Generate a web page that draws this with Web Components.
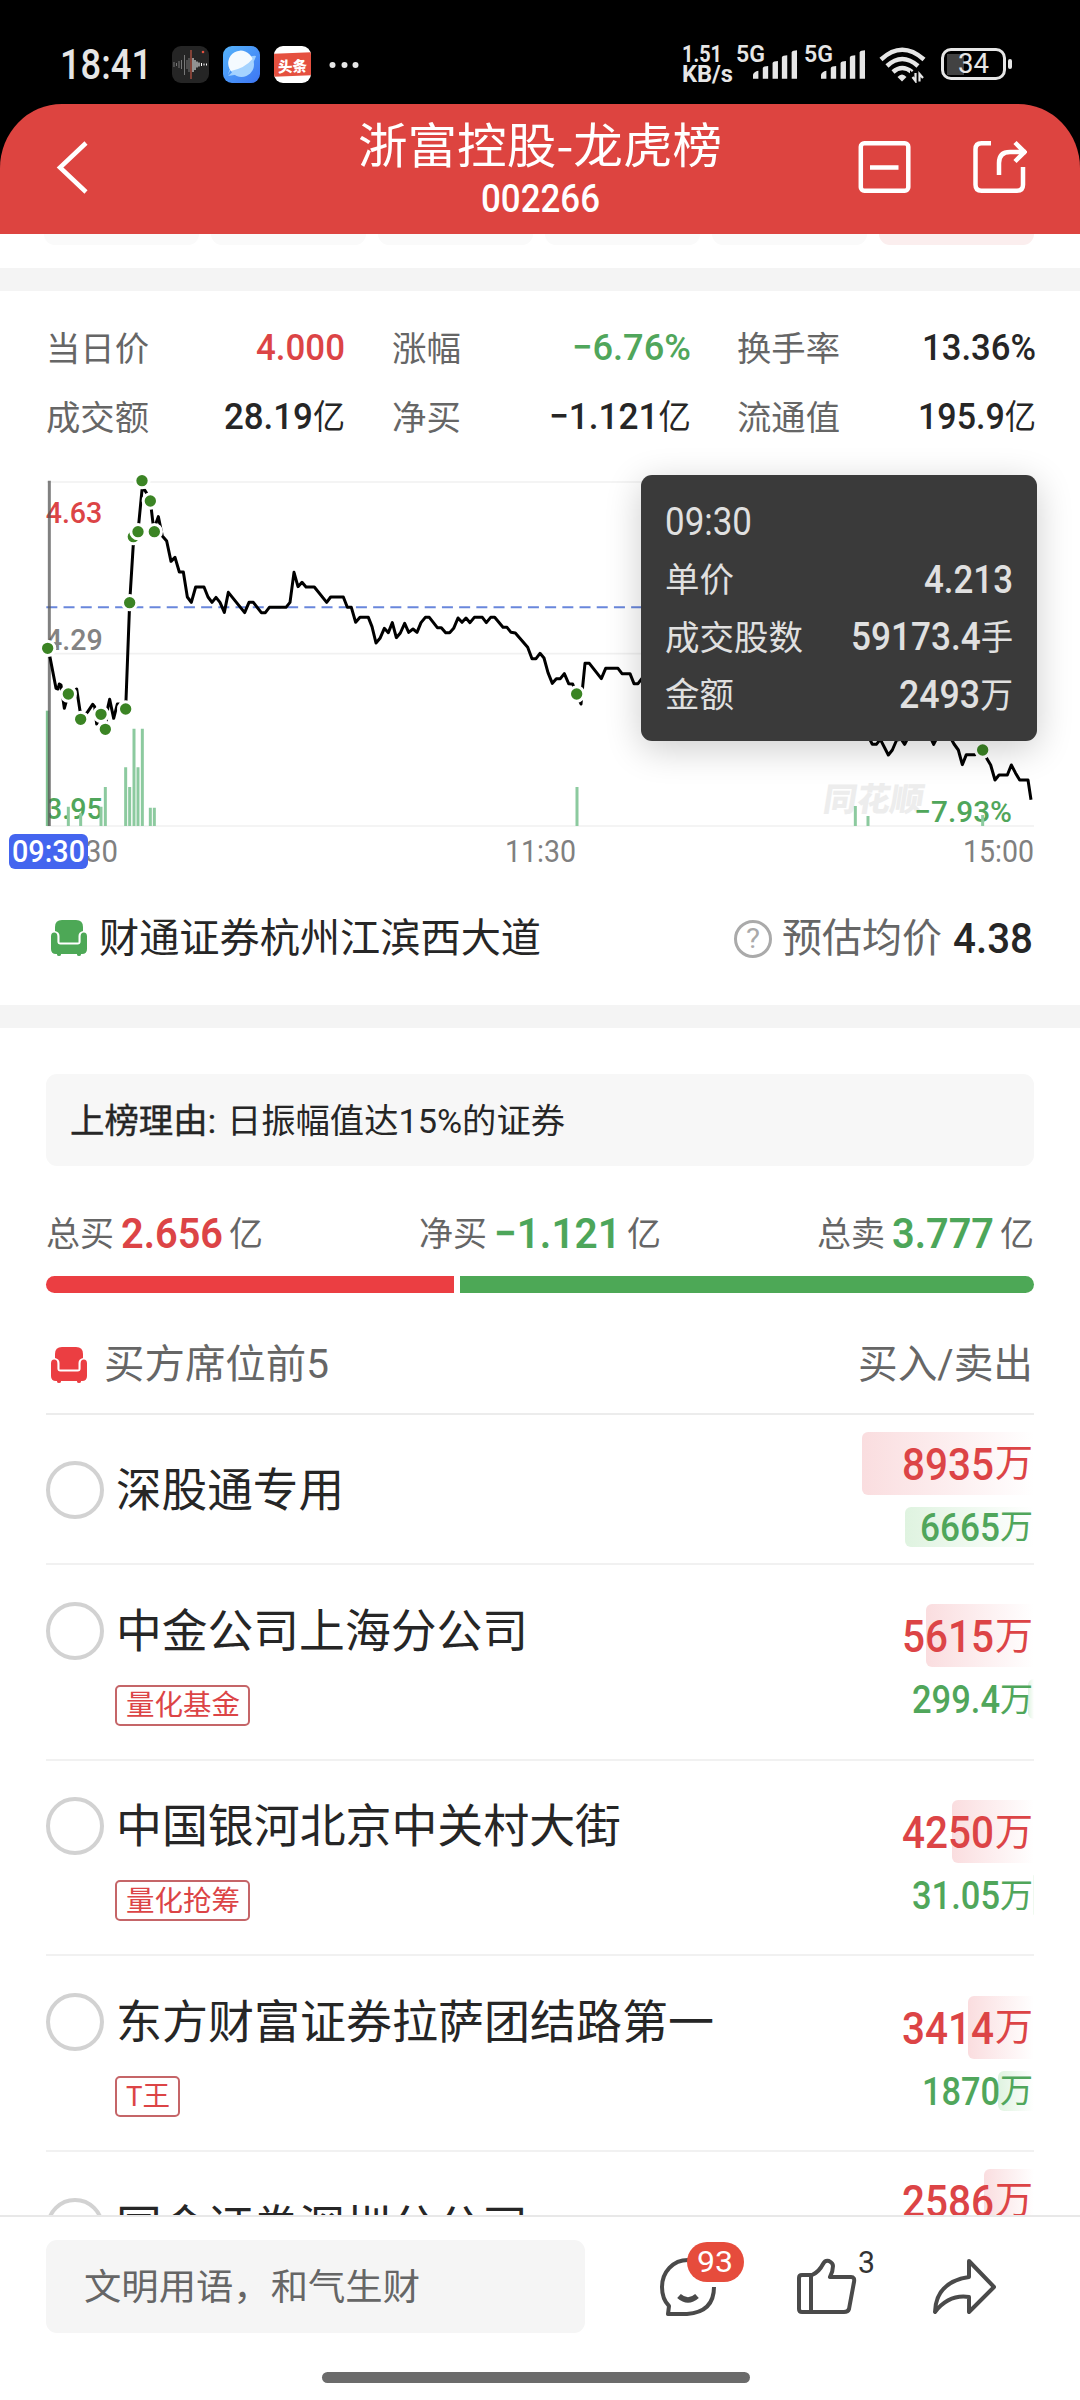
<!DOCTYPE html>
<html lang="zh-CN">
<head>
<meta charset="utf-8">
<title>浙富控股-龙虎榜</title>
<style>
html,body{margin:0;padding:0;background:#000}
body{font-family:Roboto,"Noto Sans CJK SC",sans-serif;color:#262626}
</style>
</head>
<body>
<stock-app></stock-app>
<script>
const define = (name, html, setup) => {
  customElements.define(name, class extends HTMLElement {
    connectedCallback() {
      if (this.shadowRoot) return;
      const root = this.attachShadow({ mode: 'open' });
      root.innerHTML = typeof html === 'function' ? html(this) : html;
      if (setup) setup(this, root);
    }
  });
};

/* A run of text set to an exact advance width: w = width, s = font size, b = weight, y = baseline nudge */
define('fit-text', el => `<style>
:host{display:block;flex:none;width:${el.getAttribute('w')}px;height:${el.getAttribute('s')}px;overflow:visible}
span{display:inline-block;white-space:pre;transform-origin:0 50%;font-size:${el.getAttribute('s')}px;line-height:${el.getAttribute('s')}px;font-weight:${el.getAttribute('b') || 400}}
::slotted(i){font-style:normal;font-weight:400;font-size:.92em}
</style><span><slot></slot></span>`, (el, root) => {
  const s = root.querySelector('span');
  const k = +el.getAttribute('w') / s.getBoundingClientRect().width;
  const y = el.getAttribute('y') || 0;
  s.style.transform = `translateY(${y}px) scaleX(${k})`;
});

define('signal-bars', `<style>:host{display:flex;align-items:flex-start;height:37px;width:62px}svg{display:block;margin-left:-12px}</style>
<fit-text w="29" s="24" b="600" y="-4">5G</fit-text>
<svg width="46" height="37" viewBox="0 0 46 37" fill="#e6e6e6"><path d="M0 33v-4q1-3 5.500-4v8zM10 33V22q1-2 5.500-2v13zM20 33V17q1-2 5.500-2v18zM29.500 33V11q1-2 5.500-2v24zM39.500 33V6q1-2 5.500-2v29z"/></svg>`);

define('status-bar', `<style>
:host{display:flex;height:104px;background:#000;color:#e6e6e6;box-sizing:border-box;padding:46px 68px 0 60px;align-items:flex-start}
svg{display:block;flex:none}
.l{display:flex;align-items:center;height:37px}
.tt{width:37px;height:37px;border-radius:9px;background:#fff;overflow:hidden;display:flex;align-items:center;margin-right:18px}
.tt div{width:37px;height:23px;background:#e5503f;color:#fff;display:flex;align-items:center;justify-content:center;transform:skewY(-2deg)}
.r{display:flex;margin-left:auto;height:37px}
.bat{width:65px;height:32px;box-sizing:border-box;border:3.500px solid #e6e6e6;border-radius:10px;margin:2px 1.500px 0 15px;display:flex;align-items:center;justify-content:center;background:linear-gradient(#424242,#424242) 3px 50%/17px 21px no-repeat}
.nub{width:4.500px;height:10px;background:#e6e6e6;border-radius:2px;margin-top:13px}
</style>
<div class="l">
<fit-text w="92" s="42" b="500">18:41</fit-text>
<svg style="margin-left:20px;margin-right:14px" width="37" height="37" viewBox="0 0 37 37"><rect width="37" height="37" rx="9" fill="#252525"/><g stroke="#777"><path d="M2 16v5M4.500 17v3M7 15v7M9.500 14v9M12.500 9v20M15 14v9M17 12v14"/></g><g stroke="#fff"><path d="M21 12v14M23 14v10M25 15.500v6M27 16.500v4M29.500 17v3M32 17.500v2M34.500 17.500v2"/></g><path d="M19 4v29" stroke="#e0604a"/><circle cx="31" cy="6" r="1.300" fill="#e0503f"/></svg>
<svg style="margin-right:14px" width="37" height="37" viewBox="0 0 37 37"><defs><linearGradient id="g" x2="1" y2="1"><stop stop-color="#55b4fb"/><stop offset="1" stop-color="#3d75f3"/></linearGradient></defs><rect width="37" height="37" rx="9" fill="url(#g)"/><path d="M5 29Q6 23 9 21M25 12q5-3 8-2-1 4-4 8-8 10-24 12" fill="#9dcfff"/><circle cx="18.500" cy="18.500" r="12.500" fill="#a5d3ff"/><path d="M8 25a12.500 12.500 0 1 1 21.500-12Q22 22 8 25z" fill="#f4faff"/></svg>
<div class="tt"><div><fit-text w="29" s="15" b="900">头条</fit-text></div></div>
<svg width="30" height="8" viewBox="0 0 30 8" fill="#e6e6e6"><circle cx="3.500" cy="4" r="3"/><circle cx="15.500" cy="4" r="3"/><circle cx="28" cy="4" r="3" transform="translate(-1.500)"/></svg>
</div>
<div class="r">
<div style="width:54px"><fit-text w="40" s="23" b="700" y="-3.500">1.51</fit-text><fit-text w="51" s="23" b="700" y="-6">KB/s</fit-text></div>
<signal-bars></signal-bars><signal-bars style="margin-left:6px"></signal-bars>
<svg style="margin-left:13px" width="47" height="37" viewBox="0 0 47 37" fill="none" stroke="#e6e6e6" stroke-width="4.500"><path d="M2 13.500Q23 -6 45 13.500M8 20Q23 6 39 20M14 26Q23 18 33 26"/><path d="M18.500 31q4.500-5 9 0l-4.500 4.500z" fill="#e6e6e6" stroke="none"/><path d="M33 29l4 4v3h-4zM37.500 27v8M41.500 36V28l3 3" stroke="#000" stroke-width="4"/><path d="M33.500 31l3 4V27M40.500 35.500V28l3.500 4" stroke-width="2.200"/></svg>
<div class="bat"><fit-text w="31" s="27">34</fit-text></div><div class="nub"></div>
</div>`);

define('title-bar', `<style>
:host{display:flex;height:130px;background:#dd4440;border-radius:62px 62px 0 0/64px 64px 0 0;color:#fff;box-sizing:border-box;padding:0 53px 0 56px;align-items:flex-start}
svg{fill:none;stroke:#fff;stroke-width:4.500;margin-top:36px;flex:none}
.c{display:flex;flex-direction:column;align-items:center;padding-top:16px;gap:14px;margin:0 auto 0 269px}
</style>
<svg width="33" height="56" viewBox="0 0 33 56"><path d="M30 3L4 27.500 30 52"/></svg>
<div class="c"><fit-text w="364" s="48" style="font-family:'Noto Sans CJK SC'" y="-2">浙富控股-龙虎榜</fit-text><fit-text w="119" s="38" b="500" y="-2">002266</fit-text></div>
<svg width="170" height="56" viewBox="0 0 170 56"><rect x="3.800" y="3.300" width="47.500" height="47.500" rx="3.500"/><path d="M13 27.500h28.500M134 3.300h-9.500q-6 0-6 6v35.500q0 6 6 6h35.500q6 0 6-6V27M142 35V23q0-11 11-11h16M158 2.500l9.500 9.500-9.500 9.500"/></svg>`);

define('tab-strip', `<style>:host{display:flex;height:34px;background:#fff;padding-left:44px;gap:12px}i{width:155px;height:11px;background:#fafafa;border-radius:0 0 12px 12px}i:last-child{background:#fbeeee}i:first-child{background:linear-gradient(90deg,#fff 40%,#fbfbfb)}</style><i></i><i></i><i></i><i></i><i></i><i></i>`);
define('band-gap', `<style>:host{display:block;height:23px;background:#f4f4f4}</style>`);

const stats = [
  ['当日价',103,'4.000',89,'#dc4446'],['涨幅',69,'−6.76%',119,'#50a65b'],['换手率',103,'13.36%',114],
  ['成交额',103,'28.19<i>亿</i>',121],['净买',69,'−1.121<i>亿</i>',142],['流通值',103,'195.9<i>亿</i>',118]];
define('stat-grid', `<style>
:host{display:grid;grid-template-columns:repeat(3,299px);column-gap:46.500px;grid-auto-rows:69px;padding:22px 0 0 46px}
div{display:flex;justify-content:space-between;align-items:center;color:#262626}
.k{color:#666}
</style>` + stats.map(([k,kw,v,vw,c]) => `<div><fit-text class="k" w="${kw}" s="34" y="1">${k}</fit-text><fit-text w="${vw}" s="37.500" b="500" style="${c ? 'color:' + c : ''}">${v}</fit-text></div>`).join(''));

define('tip-box', `<style>
:host{display:block;position:absolute;left:641px;top:15px;width:395.500px;height:266px;box-sizing:border-box;border-radius:11px;background:#3a3a3a;color:#e0e0e0;box-shadow:0 8px 36px rgba(0,0,0,.2);padding:18px 24px 0 23.500px}
div{display:flex;justify-content:space-between;align-items:center;height:57.700px}
</style>
<div><fit-text w="87" s="38">09:30</fit-text></div>
<div><fit-text w="69" s="34">单价</fit-text><fit-text w="89" s="38" b="500">4.213</fit-text></div>
<div><fit-text w="138" s="34" y="1">成交股数</fit-text><fit-text w="162" s="38" b="500">59173.4<i>手</i></fit-text></div>
<div><fit-text w="69" s="34">金额</fit-text><fit-text w="114" s="38" b="500">2493<i>万</i></fit-text></div>`);

/* Chart units are a third of a pixel */
const first = '143,565 150,592 168,685 174,687 178,672 183,675 193,745 205,702 230,687 240,752 242,778 262,757 278,733 284,740 290,792 303,763 316,808 324,740 329,718 341,775 352,732 357,732 377,747 389,428 401,235 414,215 426,90 434,90 440,100 451,123 462,215 468,190 475,170 487,228 500,243 513,304 525,292 538,336 550,336 562,411 574,427 587,381 612,381 624,411 636,427 648,412 660,427 673,457 685,397 734,458 747,427 760,427 784,458 796,458 808,442 858,442 870,427 882,337 894,380 906,367 918,381 943,381 980,427 992,411 1030,411 1042,442 1054,442 1067,487';
const second = '60,472 85,472 96,500 108,549 120,535 133,505 145,518 157,488 169,533 181,519 194,490 206,517 219,507 231,517 243,488 256,472 268,472 292,503 304,503 317,518 329,518 341,505 354,474 366,487 378,474 390,488 403,472 427,472 439,488 452,472 464,472 489,502 501,502 513,517 526,519 563,562 576,596 588,596 600,580 612,594 624,638 637,670 649,656 661,656 673,641 686,671 698,672 710,702 723,732 728,680 735,610 748,610 784,656 797,625 834,625 846,641 870,641 882,671 894,671 906,655 940,670';
const third = '685,830 692,843 697,853 709,853 721,838 745,885 757,870 770,840 784,838 794,853 806,830 870,830 881,853 893,830 930,830 942,852 955,870 967,914 979,884 1005,884 1028,870 1040,895 1052,915 1065,960 1077,945 1102,945 1114,915 1126,938 1139,960 1164,960 1173,1019';
const shift = (pts, dx) => pts.split(' ').map(p => { const [x, y] = p.split(','); return (+x + dx) + ',' + y; }).join(' ');
const line = first + ' ' + shift(second, 1020) + ' ' + shift(third, 1920);
const dots = [[143,565],[205,702],[242,778],[303,763],[316,808],[377,747],[389,428],[400,230],[414,215],[426,62],[451,123],[463,215],[1730,702],[2948,870]];
const vols = [[205,1040],[242,1060],[303,1040],[316,981],[377,922],[389,981],[402,806],[414,922],[427,806],[451,1043],[463,1043],[1731,981],[2566,1038],[2604,1068],[2948,1065]];
const label = (x, y, w, t, c) => `<text x="${x}" y="${y}" textLength="${w}" lengthAdjust="spacingAndGlyphs" fill="${c}">${t}</text>`;
define('price-chart', `<style>
:host{display:block;position:relative;margin-top:9px;height:370px}
svg{display:block}
text{font:500 91px Roboto,"Noto Sans CJK SC",sans-serif}
</style>
<svg width="1080" height="370" viewBox="0 0 3240 1110">
<path d="M140 66H3102M140 581H3102M140 1098H3102" stroke="#f1f1f1" stroke-width="5"/>
<path d="M139 442H3102" stroke="#6987dc" stroke-width="6" stroke-dasharray="33 18.600"/>
<text x="2478" y="1053" transform="translate(155 0) skewX(-9)" textLength="300" lengthAdjust="spacingAndGlyphs" style="font-weight:900;font-size:98px" fill="#ededed">同花顺</text>
${label(137,188,170,'4.63','#dc4446')}${label(138,570,170,'4.29','#838383')}${label(138,1078,170,'3.95','#50a65b')}${label(2743,1087,293,'−7.93%','#50a65b')}
<path d="${vols.map(([x,y]) => `M${x} ${y}V1098`).join('')}" stroke="#8cca9f" stroke-width="9"/>
<path d="M143 752V1098" stroke="#7fc391" stroke-width="11"/>
<path d="M148 62V1098" stroke="#555" stroke-opacity=".75" stroke-width="9"/>
<polyline points="${line}" fill="none" stroke="#000" stroke-width="9" stroke-linejoin="round"/>
<g fill="#3b8424" stroke="#fff" stroke-width="9">${dots.map(([x,y]) => `<circle cx="${x}" cy="${y}" r="21.500"/>`).join('')}</g>
</svg>
<tip-box></tip-box>`);

define('time-axis', `<style>
:host{display:flex;justify-content:space-between;align-items:center;height:43px;padding:0 46px 0 45px;color:#808080;position:relative}
.pill{position:absolute;left:9px;top:4px;width:78.500px;height:35px;border-radius:6px;background:#4465ef;color:#fff;display:flex;align-items:center;justify-content:center}
</style>
<fit-text w="73" s="31">09:30</fit-text><fit-text w="71" s="31">11:30</fit-text><fit-text w="71" s="31">15:00</fit-text>
<div class="pill"><fit-text w="73" s="31" b="500">09:30</fit-text></div>`);

define('seat-icon', `<style>:host{display:block;flex:none;width:36px;height:37px}svg{display:block}</style>
<svg width="36" height="37" viewBox="0 0 36 37" fill="currentColor"><path d="M4 11V7q0-7 7-7h14q7 0 7 7v4q-4.500 1-4.500 5v6.500h-19V16q0-4-4.500-5z"/><path d="M0 16.500q0-4 3.200-4t3.200 4v5q0 3 3 3h17.200q3 0 3-3v-5q0-4 3.200-4t3.200 4V29q0 5-5 5H5q-5 0-5-5z"/><path d="M6 33h4v1.500q0 1.500-2 1.500t-2-1.500zM26 33h4v1.500q0 1.500-2 1.500t-2-1.500z"/></svg>`);

define('seat-row', `<style>
:host{display:flex;align-items:center;height:60px;margin:35px 47px 37px 51px}
.q{width:38px;height:38px;box-sizing:border-box;border:3px solid #aaa;border-radius:50%;color:#aaa;display:flex;align-items:center;justify-content:center;margin:2px 10px 0 auto}
</style>
<seat-icon style="color:#4da856"></seat-icon><fit-text style="margin-left:12px" w="442" s="40" y="1">财通证券杭州江滨西大道</fit-text>
<div class="q"><fit-text w="14" s="28">?</fit-text></div>
<fit-text w="160" s="40" style="color:#666" y="1">预估均价</fit-text><fit-text style="margin-left:11px" w="80" s="42" b="500" y="1">4.38</fit-text>`);

define('reason-box', `<style>
:host{display:flex;align-items:center;height:92px;margin:46px 46px 0;box-sizing:border-box;padding-left:23.500px;border-radius:11px;background:#f7f7f7}
</style><fit-text w="146" s="34" y="1" style="-webkit-text-stroke:.4px #262626">上榜理由:</fit-text><fit-text style="margin-left:11px" w="338" s="34" y="1">日振幅值达15%的证券</fit-text>`);

define('total-item', el => `<style>:host{display:flex;align-items:center;color:#666}</style>
<fit-text w="68" s="34" y="1">${el.getAttribute('k')}</fit-text><fit-text style="margin-left:7px;color:${el.getAttribute('c')}" w="${el.getAttribute('w')}" s="43" b="600">${el.getAttribute('v')}</fit-text><fit-text style="margin-left:6px" w="34" s="34" y="1">亿</fit-text>`);
define('total-row', `<style>
:host{display:block;margin:42px 46px 0}
.t{display:flex;justify-content:space-between;height:50px;align-items:center}
.b{display:flex;gap:6px;height:17px;margin-top:18px}
.b i{background:#eb3e42;width:408px;border-radius:8.500px 0 0 8.500px}.b b{background:#4da856;flex:1;border-radius:0 8.500px 8.500px 0}
</style><div class="t"><total-item k="总买" v="2.656" w="102" c="#dc4446"></total-item><total-item k="净买" v="−1.121" w="127" c="#4da65a"></total-item><total-item k="总卖" v="3.777" w="102" c="#4da65a"></total-item></div>
<div class="b"><i></i><b></b></div>`);

define('list-head', `<style>:host{display:flex;align-items:center;height:122px;box-sizing:border-box;padding:24px 1.500px 0 5px;margin:0 46px;border-bottom:2px solid #ececec;color:#666}
.r{margin-left:auto}</style>
<seat-icon style="color:#eb3e42"></seat-icon><fit-text style="margin-left:17px" w="225" s="40">买方席位前5</fit-text><fit-text class="r" w="175" s="40">买入/卖出</fit-text>`);

define('amount-cell', el => {
  const g = el.hasAttribute('sell');
  const [h, s, u, c, a] = g ? [40, 38, 33, '#50a65b', '#dff3e0'] : [63, 45, 38, '#dc4446', '#fadddf'];
  return `<style>:host{display:flex;align-items:center;justify-content:flex-end;width:172px;height:${h}px;color:${c}}
.bg{display:flex;align-items:center;justify-content:flex-end;width:${el.getAttribute('bar')}px;height:${h}px;border-radius:6px 0 0 6px;background:linear-gradient(90deg,${a},#fff)}</style>
<div class="bg"><fit-text w="${el.getAttribute('w')}" s="${s}" b="500" y="1">${el.getAttribute('v')}</fit-text><fit-text style="margin:0 1px 0 ${g ? 0 : 1}px" w="${u}" s="${u}">万</fit-text></div>`;
});

define('seat-item', el => {
  const d = JSON.parse(el.getAttribute('data'));
  return `<style>
:host{display:flex;justify-content:space-between;align-items:center;height:${d.tag ? 195.7 : 150}px;box-sizing:border-box;border-bottom:2px solid #f1f1f1;margin:0 46px;flex:none}
.n{display:flex;align-items:center;height:58px;padding-top:2px}
.o{width:58px;height:58px;border:4.500px solid #d2d2d2;border-radius:50%;box-sizing:border-box;margin-right:12px}
.tag{margin:25px 0 0 69px;height:41px;width:${d.tag ? d.tag[1] + 21 : 0}px;border:2px solid #c56568;border-radius:5px;color:#dc4446;display:flex;align-items:center;justify-content:center;box-sizing:border-box}
.l{padding-top:${d.tag ? 1.5 : 0}px}
.a{display:flex;flex-direction:column;gap:12px;height:115px}
</style>
<div class="l"><div class="n"><div class="o"></div><fit-text w="${d.n[1]}" s="46">${d.n[0]}</fit-text></div>${d.tag ? `<div class="tag"><fit-text w="${d.tag[1]}" s="28" y=".5">${d.tag[0]}</fit-text></div>` : ''}</div>
<div class="a"><amount-cell v="${d.b[0]}" w="92" bar="${d.b[1]}"></amount-cell>${d.s ? `<amount-cell sell v="${d.s[0]}" w="${d.s[1]}" bar="${d.s[2]}"></amount-cell>` : ''}</div>`;
});

const seats = [
  { n: ['深股通专用', 228], b: ['8935', 172], s: ['6665', 80, 129] },
  { n: ['中金公司上海分公司', 412], tag: ['量化基金', 114], b: ['5615', 108], s: ['299.4', 88, 6] },
  { n: ['中国银河北京中关村大街', 505], tag: ['量化抢筹', 114], b: ['4250', 82], s: ['31.05', 88, 1] },
  { n: ['东方财富证券拉萨团结路第一', 598], tag: ['T王', 44], b: ['3414', 66], s: ['1870', 78, 36] },
  { n: ['国金证券深圳分公司', 412], b: ['2586', 50] }];

define('comment-bar', `<style>
:host{display:flex;height:185px;box-sizing:border-box;border-top:2px solid #e8e8e8;background:#fff;flex-direction:column}
.t{display:flex;padding:23px 0 0 46px;height:93px}
.in{width:538.500px;height:93px;border-radius:11px;background:#f5f5f5;display:flex;align-items:center;padding-left:38px;box-sizing:border-box;color:#666}
svg{display:block;fill:none;stroke:#4a4a4a;stroke-width:4;stroke-linejoin:round}
.i{position:relative;margin-top:17px}
.badge{position:absolute;left:28px;top:-15px;width:57px;height:40px;border-radius:20px;background:#e64c3c;color:#fff;display:flex;align-items:center;justify-content:center}
.num{position:absolute;left:63px;top:-10px;color:#333}
.h{width:428px;height:11px;border-radius:6px;background:#6b6b6b;margin:39px 0 0 322px}
</style>
<div class="t"><div class="in"><fit-text w="336" s="36" y="1">文明用语，和气生财</fit-text></div>
<div class="i" style="margin-left:74px"><svg width="58" height="62" viewBox="0 0 58 62"><path d="M29 3C14 3 3 15 3 30q0 12 7 19L9 57H28q27-2 27-27"/><path d="M20 39q9 8 18 0" stroke-width="5.500"/></svg><div class="badge"><fit-text w="36" s="30">93</fit-text></div></div>
<div class="i" style="margin-left:78px"><svg width="62" height="62" viewBox="0 0 62 62"><path d="M4 21q0-3 3-3H17Q24 15 28 7q2-4 6-3 4 2 4 5 0 5-3 11H56q4 0 3 5L54 52q-1 3-5 3H7q-3 0-3-3zM16 18V55"/></svg><fit-text class="num" w="17" s="31">3</fit-text></div>
<div class="i" style="margin-left:74px"><svg width="66" height="62" viewBox="0 0 66 62"><path d="M38 4L63 30 38 55V40Q18 37 4 55 5 25 38 20z"/></svg></div></div>
<div class="h"></div>`);

define('stock-app', `<style>
:host{display:flex;flex-direction:column;width:1080px;height:2400px;overflow:hidden}
main{height:1981px;background:#fff;overflow:hidden;flex:none}
comment-bar{flex:none}
</style><status-bar></status-bar><title-bar></title-bar>
<main><tab-strip></tab-strip><band-gap></band-gap><stat-grid></stat-grid><price-chart></price-chart><time-axis></time-axis><seat-row></seat-row><band-gap></band-gap><reason-box></reason-box><total-row></total-row><list-head></list-head>${seats.map(s => `<seat-item data='${JSON.stringify(s)}'></seat-item>`).join('')}</main>
<comment-bar></comment-bar>`);
</script>
</body>
</html>
